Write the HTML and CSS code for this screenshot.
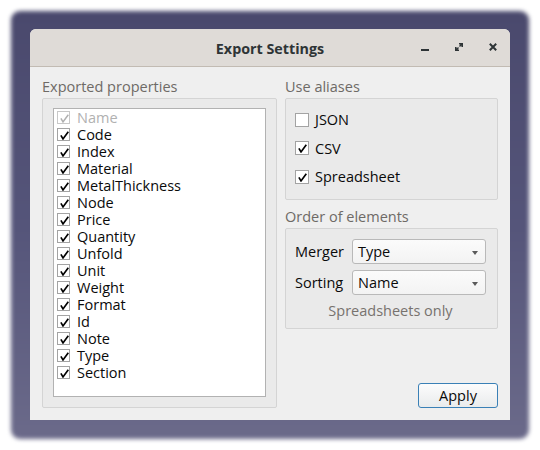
FILE: index.html
```html
<!DOCTYPE html>
<html>
<head>
<meta charset="utf-8">
<link rel="stylesheet" href="styles.css">
</head>
<body>
<div class="backdrop"></div>
<div class="window">
  <div class="titlebar">
    <span class="title">Export Settings</span>
    <div class="controls">
      <svg class="ctl" width="10" height="10" viewBox="0 0 10 10"><rect x="1" y="7" width="8" height="2" fill="#2e3436"/></svg>
      <svg class="ctl" width="10" height="10" viewBox="0 0 10 10"><path d="M5 1h4v4h-1.6v-1.4l-1.4 1.4-1-1 1.4-1.4h-1.4z M1 5h1.6v1.4l1.4-1.4 1 1-1.4 1.4h1.4v1.6h-4z" fill="#2e3436"/></svg>
      <svg class="ctl" width="10" height="10" viewBox="0 0 10 10"><path d="M1.8 1.8l6.4 6.4M8.2 1.8l-6.4 6.4" stroke="#2e3436" stroke-width="2"/></svg>
    </div>
  </div>
  <div class="content">
    <div class="col">
      <div class="group-title">Exported properties</div>
      <div class="frame frame-list">
        <div class="list">
          <div class="row disabled"><span class="cb checked"></span>Name</div>
          <div class="row"><span class="cb checked"></span>Code</div>
          <div class="row"><span class="cb checked"></span>Index</div>
          <div class="row"><span class="cb checked"></span>Material</div>
          <div class="row"><span class="cb checked"></span>MetalThickness</div>
          <div class="row"><span class="cb checked"></span>Node</div>
          <div class="row"><span class="cb checked"></span>Price</div>
          <div class="row"><span class="cb checked"></span>Quantity</div>
          <div class="row"><span class="cb checked"></span>Unfold</div>
          <div class="row"><span class="cb checked"></span>Unit</div>
          <div class="row"><span class="cb checked"></span>Weight</div>
          <div class="row"><span class="cb checked"></span>Format</div>
          <div class="row"><span class="cb checked"></span>Id</div>
          <div class="row"><span class="cb checked"></span>Note</div>
          <div class="row"><span class="cb checked"></span>Type</div>
          <div class="row"><span class="cb checked"></span>Section</div>
        </div>
      </div>
    </div>
    <div class="col">
      <div class="group-title">Use aliases</div>
      <div class="frame frame-aliases">
        <div class="row opt"><span class="cb"></span>JSON</div>
        <div class="row opt"><span class="cb checked"></span>CSV</div>
        <div class="row opt"><span class="cb checked"></span>Spreadsheet</div>
      </div>
      <div class="group-title second">Order of elements</div>
      <div class="frame frame-order">
        <div class="form">
          <span class="label">Merger</span>
          <div class="combo">Type<span class="arrow"></span></div>
          <span class="label">Sorting</span>
          <div class="combo">Name<span class="arrow"></span></div>
        </div>
        <div class="hint">Spreadsheets only</div>
      </div>
      <button class="apply">Apply</button>
    </div>
  </div>
</div>
</body>
</html>
```
FILE: styles.css
```css
* { box-sizing: border-box; }
html, body { margin: 0; background: #ffffff; }
body {
  padding: 29px 30px 0 30px;
  font-family: "Open Sans", "Noto Sans", sans-serif;
  font-size: 14.5px;
  line-height: 17px;
  color: #141414;
  position: relative;
  height: 450px;
}
.backdrop {
  position: absolute;
  left: 11px; top: 11px;
  width: 518px; height: 428px;
  border-radius: 9px;
  background: linear-gradient(180deg, #4a496d 0%, #55557a 50%, #6b6a8a 100%);
  filter: blur(2px);
}
.window {
  position: relative;
  width: 480px;
  height: 391px;
  display: flex;
  flex-direction: column;
  background: #efefef;
  border-radius: 6px 6px 0 0;
}
.titlebar {
  height: 38px;
  flex: none;
  background: #dfdbd7;
  border-bottom: 1px solid #c2bbb3;
  border-radius: 6px 6px 0 0;
  display: flex;
  align-items: center;
  justify-content: center;
  position: relative;
}
.title {
  font-weight: bold;
  font-size: 14.3px;
  color: #2e3436;
  margin-top: 1px;
}
.controls {
  position: absolute;
  right: 12px;
  top: 13px;
  display: flex;
  gap: 24px;
}
.ctl { display: block; }
.content {
  flex: 1;
  display: grid;
  grid-template-columns: 235px 213px;
  column-gap: 8px;
  padding: 10px 12px 12px 12px;
}
.col {
  display: flex;
  flex-direction: column;
}
.group-title {
  height: 20px;
  line-height: 20px;
  margin-bottom: 1px;
  color: #6e6a66;
}
.group-title.second { margin-top: 7px; }
.frame {
  border: 1px solid #d4d4d4;
  border-radius: 2px;
  background: #eaeaea;
}
.frame-list {
  flex: 1;
  padding: 9px 10px 10px 10px;
  display: flex;
}
.list {
  flex: 1;
  background: #ffffff;
  border: 1px solid #b2b2b2;
  padding: 0 3px;
}
.row {
  height: 17px;
  line-height: 17px;
  display: flex;
  align-items: center;
  gap: 7px;
  color: #0a0a0a;
}
.row.disabled { color: #b1b1b1; }
.cb {
  width: 13px;
  height: 13px;
  flex: none;
  border: 1px solid #a3a3a3;
  background: #ffffff;
  position: relative;
}
.cb.checked::after {
  content: "";
  position: absolute;
  left: 1.5px; top: 1.5px;
  width: 9px; height: 9px;
  background: no-repeat center/9px 9px url("data:image/svg+xml,%3Csvg xmlns='http://www.w3.org/2000/svg' viewBox='0 0 9 9'%3E%3Cpath d='M0.9 4.4 L3 7.9 L8.3 0.8' fill='none' stroke='%23000' stroke-width='1.7'/%3E%3C/svg%3E");
}
.disabled .cb { border-color: #c8c8c8; }
.disabled .cb.checked::after {
  background-image: url("data:image/svg+xml,%3Csvg xmlns='http://www.w3.org/2000/svg' viewBox='0 0 9 9'%3E%3Cpath d='M0.9 4.4 L3 7.9 L8.3 0.8' fill='none' stroke='%23b0b0b0' stroke-width='1.5'/%3E%3C/svg%3E");
}
.frame-aliases {
  padding: 12px 9px 14px 9px;
  display: flex;
  flex-direction: column;
  gap: 11.5px;
}
.row.opt { gap: 6px; }
.row.opt .cb { width: 14px; height: 14px; }
.row.opt .cb.checked::after { left: 2px; top: 2px; }
.frame-order {
  padding: 10px 11px 9.5px 9px;
}
.form {
  display: grid;
  grid-template-columns: 57px 1fr;
  row-gap: 6px;
  align-items: center;
}
.label { color: #0a0a0a; }
.combo {
  height: 25px;
  border: 1px solid #b9b9b9;
  border-radius: 3px;
  background: linear-gradient(180deg, #fbfbfb, #f3f3f3);
  padding-left: 5px;
  display: flex;
  align-items: center;
  position: relative;
  color: #0a0a0a;
}
.arrow {
  position: absolute;
  right: 7px;
  top: 10.5px;
  width: 0; height: 0;
  border-left: 3.5px solid transparent;
  border-right: 3.5px solid transparent;
  border-top: 4px solid #5a5a5a;
}
.hint {
  margin-top: 6.5px;
  height: 17px;
  line-height: 17px;
  text-align: center;
  color: #77726e;
}
.apply {
  margin-top: auto;
  align-self: flex-end;
  width: 80px;
  height: 25px;
  border: 1px solid #3a80b6;
  border-radius: 3px;
  background: linear-gradient(180deg, #fcfcfc, #e9ebec);
  font-family: inherit;
  font-size: 14.5px;
  color: #0a0a0a;
  padding: 0;
}
```
